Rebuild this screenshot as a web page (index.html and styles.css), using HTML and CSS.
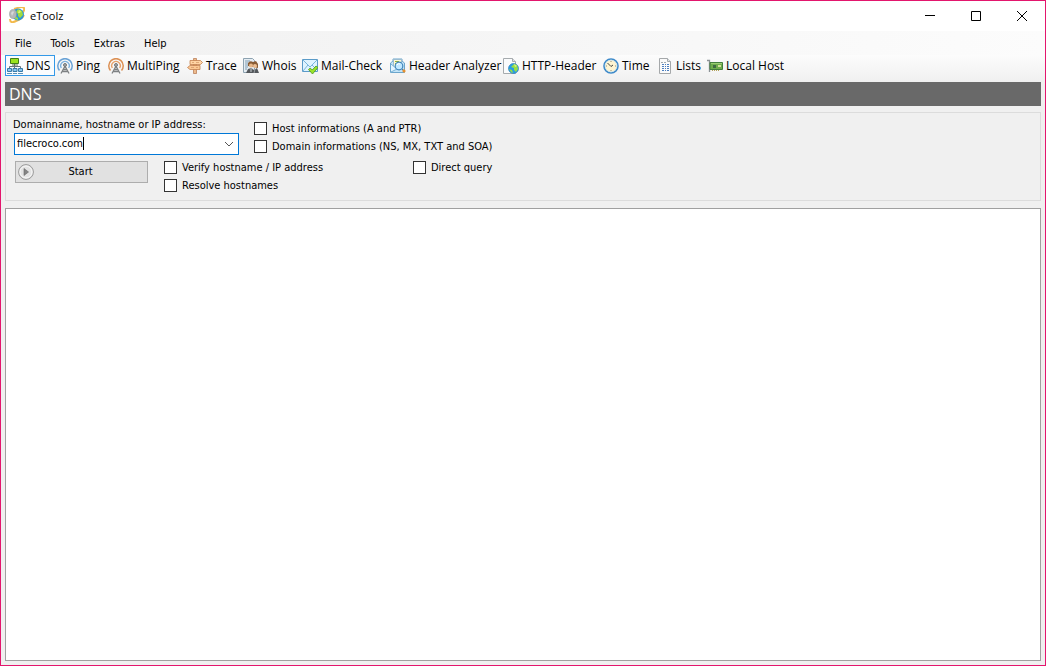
FILE: index.html
```html
<!DOCTYPE html>
<html lang="en">
<head>
<meta charset="utf-8">
<title>eToolz</title>
<link rel="stylesheet" href="styles.css">
</head>
<body>
<div class="window">
  <header class="titlebar">
    <svg class="icon" viewBox="0 0 16 16"><path d="M5 2Q14-1 15 1Q16 3 13 7M1 12Q1 17 7 14Q13 12 15 8" fill="none" stroke="#f3ba4c" stroke-width="2"/><circle cx="9" cy="7.500" r="6" fill="#2b95dc"/><path d="M9 2l4 2 1 4-3 3-2-2 0-2-2-2zM6 9l3 2 0 2-3-1z" fill="#9fdc3e"/><path d="M10 3l2 1-1 2-2 0z" fill="#daf46c"/><ellipse cx="4" cy="7" rx="3.500" ry="4.500" fill="#b5b8ba" stroke="#8d9295" stroke-width=".5"/><path d="M2 6Q4 3 5 5L3 9z" fill="#d7d9da"/></svg>
    <h1 class="app-name">eToolz</h1>
    <div class="window-buttons">
      <button class="window-button" aria-label="Minimize"><svg viewBox="0 0 10 10"><path d="M0 4.500h10" /></svg></button>
      <button class="window-button" aria-label="Maximize"><svg viewBox="0 0 10 10"><path d="M.5.5h9v9h-9z" /></svg></button>
      <button class="window-button" aria-label="Close"><svg viewBox="0 0 10 10"><path d="M0 0l10 10M10 0L0 10" /></svg></button>
    </div>
  </header>
  <nav class="menubar" aria-label="Menu">
    <button class="menu">File</button><button class="menu">Tools</button><button class="menu">Extras</button><button class="menu">Help</button>
  </nav>
  <div class="toolbar" role="toolbar" aria-label="Tools">
    <button class="tool active">
      <svg class="icon" viewBox="0 0 16 16"><path d="M7.500 5v5M2.500 11V8.500h11V11" fill="none" stroke="#66747c"/><path d="M3.500.5h8v5h-8z" fill="#9be41e" stroke="#427d18"/><path d="M5 7h6" stroke="#60754f"/><path d="M.5 10.500h4v3h-4zM6 10.500h4v3H6zM11.500 10.500h4v3h-4z" fill="#8cc6ef" stroke="#397ba8"/><path d="M0 15.500h5M6 15.500h4M11 15.500h5" stroke="#5b91b5"/></svg>DNS</button>
    <button class="tool">
      <svg class="icon" viewBox="0 0 16 16"><path d="M2.500 12.500A7.200 7.200 0 1 1 13.500 12.500" fill="none" stroke="#6ba3d6" stroke-width="1.500"/><path d="M4.300 10a4.300 4.300 0 1 1 7.400 0" fill="none" stroke="#7fb2df" stroke-width="1.400"/><path d="M8 8L4 15.500M8 8l4 7.500M6.500 11.500h3M5.500 13.500h5" fill="none" stroke="#7e8183" stroke-width="1.300"/><circle cx="8" cy="7" r="1.500" fill="#a4a7a9" stroke="#75787a"/></svg>Ping</button>
    <button class="tool">
      <svg class="icon" viewBox="0 0 16 16"><path d="M2.500 12.500A7.200 7.200 0 1 1 13.500 12.500" fill="none" stroke="#dc9155" stroke-width="1.500"/><path d="M4.300 10a4.300 4.300 0 1 1 7.400 0" fill="none" stroke="#e5a06b" stroke-width="1.400"/><path d="M8 8L4 15.500M8 8l4 7.500M6.500 11.500h3M5.500 13.500h5" fill="none" stroke="#7e8183" stroke-width="1.300"/><circle cx="8" cy="7" r="1.500" fill="#a4a7a9" stroke="#75787a"/></svg>MultiPing</button>
    <button class="tool">
      <svg class="icon" viewBox="0 0 16 16"><path d="M6.500.5h3v15h-3z" fill="#edbb8d" stroke="#b4774f" stroke-width=".7"/><path d="M3 2.500h10.500l2 2-2 2H3z" fill="#ffd4a4" stroke="#c3804f" stroke-width=".8"/><path d="M13 7.500H3l-2.500 2L3 11.500h10z" fill="#fbc894" stroke="#c3804f" stroke-width=".8"/><path d="M5 4.500h2m2 0h3M4 9.500h3m2 0h2" stroke="#d39766" stroke-width=".7"/></svg>Trace</button>
    <button class="tool">
      <svg class="icon" viewBox="0 0 16 16"><path d="M.5.5h9l2 2v12H.5z" fill="#e5edf3" stroke="#8da2b0"/><path d="M2 3h5M2 5h3M2 7h3M2 9h3M2 11h2" stroke="#7f9db4"/><path d="M5 8V5Q7 2 10 4l3-1 2 3v4z" fill="#8a5d36"/><circle cx="8" cy="7.500" r="2" fill="#e8b88a"/><circle cx="12" cy="8" r="2" fill="#edc095"/><path d="M3 15l2-4 3-1 3 2 3-2 2 5z" fill="#54585c"/><path d="M7 10l1 4 1-4M12 11l-1 4" fill="none" stroke="#b8bdc0" stroke-width=".7"/></svg>Whois</button>
    <button class="tool">
      <svg class="icon" viewBox="0 0 16 16"><path d="M.5 1.500h15v12H.5z" fill="#dff3ff" stroke="#5b9bc8"/><path d="M1 2l7 7 7-7M1 13l5-6M15 12l-5-5" fill="none" stroke="#7bb5db"/><path d="M6.500 11.500l1.700-1.500 2 2 3.800-4 2 1.500-5.500 6.500z" fill="#9be32a" stroke="#4a991d" stroke-width=".8"/></svg>Mail-Check</button>
    <button class="tool">
      <svg class="icon" viewBox="0 0 16 16"><path d="M.5 5L3 3V1h9v2l2.500 2v9.500H.5z" fill="#c2e4f8" stroke="#6ca6cc"/><path d="M3.500 1.500h8v8h-8z" fill="#fff8d5" stroke="#9cbdd1"/><path d="M5 3.500h4M5 5.500h2" stroke="#93b13a"/><path d="M1 6l6 5-6 3" fill="#e4f5ff" stroke="#7ab2d7"/><circle cx="9" cy="8" r="3.800" fill="#c2e9ff" stroke="#4287bb" stroke-width="1.200"/><path d="M7 7Q8 5 10 6" fill="none" stroke="#fff"/><path d="M12 11l1 1" stroke="#517fa5" stroke-width="1.500"/><path d="M13 12l2 2" stroke="#e7902e" stroke-width="2.500"/></svg>Header Analyzer</button>
    <button class="tool">
      <svg class="icon" viewBox="0 0 16 16"><path d="M.5.500h9l3 3v12H.5z" fill="#fafbfc" stroke="#a6abae"/><path d="M9.500.500v3h3" fill="#dfe4e7" stroke="#a6abae"/><circle cx="10.500" cy="10.500" r="5" fill="#299ee2" stroke="#3282bb" stroke-width=".7"/><path d="M11 6l3 1 1 4-2 3-2-2 0-2-3-1zM6 11l3 1 1 3-2-1z" fill="#97df45"/><path d="M11 6l3 2-2 1z" fill="#e2f184"/></svg>HTTP-Header</button>
    <button class="tool">
      <svg class="icon" viewBox="0 0 16 16"><circle cx="8" cy="8" r="7" fill="#fff5d1" stroke="#3c89ca" stroke-width="1.600"/><circle cx="8" cy="8" r="5.800" fill="none" stroke="#c4e0f0" stroke-width=".7"/><path d="M8 3v1M8 12v1M3 8h1M12 8h1" stroke="#999078"/><path d="M4.500 5L8 8.500L10 7" fill="none" stroke="#494945"/></svg>Time</button>
    <button class="tool">
      <svg class="icon" viewBox="0 0 16 16"><path d="M2.500.500h8l3 3v12h-11z" fill="#fafafa" stroke="#a5a8aa"/><path d="M10.500.500v3h3" fill="#e2e6e8" stroke="#a4aaae"/><path d="M4 4.500h2m1 0h2" stroke="#a0aab1"/><path d="M5 6.500h2m1 0h1m1 0h2M5 8.500h2m1 0h1m1 0h2M5 10.500h2m1 0h1m1 0h2M5 12.500h2m1 0h1m1 0h2" stroke="#4c7fc0"/></svg>Lists</button>
    <button class="tool">
      <svg class="icon" viewBox="0 0 16 16"><path d="M0 2.500h2.500V14" fill="none" stroke="#8b9296" stroke-width="1.300"/><path d="M3 4.500h12.500v7H3z" fill="#6eac4c" stroke="#437e3d"/><path d="M4 5.500h11" stroke="#9acb73"/><path d="M6 7h3v3H6z" fill="#3f6942"/><path d="M11 7h3v2h-3z" fill="#d3df9b"/><path d="M5 12.500h8" stroke="#b3a25a" stroke-dasharray="1 1"/></svg>Local Host</button>
  </div>
  <main class="content">
    <h2 class="heading">DNS</h2>
    <form class="panel">
      <div class="row">
        <div class="field">
          <label for="host">Domainname, hostname or IP address:</label>
          <div class="combo">
            <input class="host" id="host" type="text" value="filecroco.com">
            <span class="caret"></span>
            <button class="drop" type="button" aria-label="Show recent hosts"><svg viewBox="0 0 10 6"><path d="M1 1l4 4 4-4"/></svg></button>
          </div>
        </div>
        <div class="checks">
          <label class="check"><input type="checkbox">Host informations (A and PTR)</label>
          <label class="check"><input type="checkbox">Domain informations (NS, MX, TXT and SOA)</label>
        </div>
      </div>
      <div class="row actions">
        <button class="start" type="button"><svg class="icon" viewBox="0 0 16 16"><circle cx="8" cy="8" r="7.400" fill="#e4e4e4" stroke="#999"/><circle cx="8" cy="8" r="6" fill="none" stroke="#f8f8f8"/><path d="M6 4.500v7l4.500-3.500z" fill="#858585" stroke="#666" stroke-width=".6"/></svg><span>Start</span></button>
        <div class="checks options">
          <label class="check"><input type="checkbox">Verify hostname / IP address</label>
          <label class="check"><input type="checkbox">Resolve hostnames</label>
        </div>
        <div class="checks">
          <label class="check"><input type="checkbox">Direct query</label>
        </div>
      </div>
    </form>
    <section class="output" aria-label="Results"></section>
  </main>
</div>
</body>
</html>
```

FILE: styles.css
```css
* {
  box-sizing: border-box;
}

body {
  margin: 0;
  background: #f0f0f0;
  color: #000;
  font: 11px/14px "DejaVu Sans Condensed", "Noto Sans", sans-serif;
}

button {
  margin: 0;
  padding: 0;
  border: 0;
  background: none;
  color: inherit;
  font: inherit;
}

.window {
  display: flex;
  flex-direction: column;
  min-height: 100vh;
  border: 1px solid #e3166d;
}

.icon {
  flex: none;
  width: 16px;
  height: 16px;
}

.titlebar {
  display: flex;
  align-items: center;
  gap: 5px;
  height: 30px;
  padding-left: 8px;
  background: #fff;
}

.titlebar .icon {
  margin-bottom: 2px;
}

.app-name {
  flex: 1;
  margin: 0;
  font: 11px/16px "Open Sans", "Noto Sans", sans-serif;
}

.window-buttons {
  display: flex;
}

.window-button {
  display: flex;
  align-items: center;
  justify-content: center;
  width: 46px;
  height: 30px;
}

.window-button svg {
  width: 10px;
  height: 10px;
  overflow: visible;
  fill: none;
  stroke: #000;
}

.menubar {
  display: flex;
  height: 24px;
  padding-left: 4px;
  background: linear-gradient(to right, #f0f0f0, #fcfcfc);
}

.menu {
  padding: 1px 9px 0 10px;
}

.toolbar {
  display: grid;
  grid-template-columns: 50px 51px 79px 56px 59px 88px 113px 100px 54px 50px 79px;
  height: 27px;
  padding: 0 4px;
  background: linear-gradient(#fcfcfc, #f0f0f0);
  font: 12px/16px "Open Sans", "Noto Sans", sans-serif;
}

.tool {
  display: flex;
  align-items: center;
  gap: 3px;
  height: 21px;
  padding-left: 2px;
  white-space: nowrap;
}

.tool.active {
  padding-left: 1px;
  border: 1px solid #3399e8;
  background: #fafcfe;
}

.content {
  display: flex;
  flex: 1;
  flex-direction: column;
  padding: 0 4px 4px;
}

.heading {
  margin: 0 0 6px;
  padding: 0 4px;
  background: #696969;
  color: #fff;
  font: 16px/24px "Open Sans", "Noto Sans", sans-serif;
}

.panel {
  margin-bottom: 7px;
  padding: 5px 7px 7px;
  border: 1px solid #dcdcdc;
}

.row {
  display: flex;
}

.actions {
  padding: 6px 0 0 2px;
}

.field {
  width: 226px;
  margin-right: 15px;
}

.combo {
  position: relative;
  display: flex;
  height: 22px;
  margin: 1px 0 0 1px;
  border: 1px solid #0078d7;
  background: #fff;
}

.host {
  flex: 1;
  min-width: 0;
  padding: 0 2px 1px;
  border: 0;
  outline: 0;
  background: transparent;
  color: #000;
  font: inherit;
}

.caret {
  position: absolute;
  top: 3px;
  left: 68px;
  width: 1px;
  height: 13px;
  background: #000;
}

.drop {
  display: flex;
  align-items: center;
  justify-content: center;
  width: 18px;
}

.drop svg {
  width: 10px;
  height: 6px;
  fill: none;
  stroke: #555;
}

.checks {
  display: flex;
  flex-direction: column;
  gap: 4px;
  padding-top: 4px;
}

.actions .checks {
  padding-top: 0;
}

.options {
  width: 249px;
}

.check {
  display: flex;
  align-items: flex-start;
  gap: 5px;
  white-space: nowrap;
}

.check input {
  appearance: none;
  width: 13px;
  height: 13px;
  margin: 0;
  border: 1px solid #333;
  background: #fff;
}

.start {
  display: flex;
  align-items: center;
  width: 133px;
  height: 22px;
  margin-right: 16px;
  padding: 0 2px;
  border: 1px solid #adadad;
  background: #e1e1e1;
}

.start span {
  flex: 1;
  padding-right: 18px;
  text-align: center;
}

.output {
  flex: 1;
  border: 1px solid #a0a0a0;
  background: #fff;
}
```
